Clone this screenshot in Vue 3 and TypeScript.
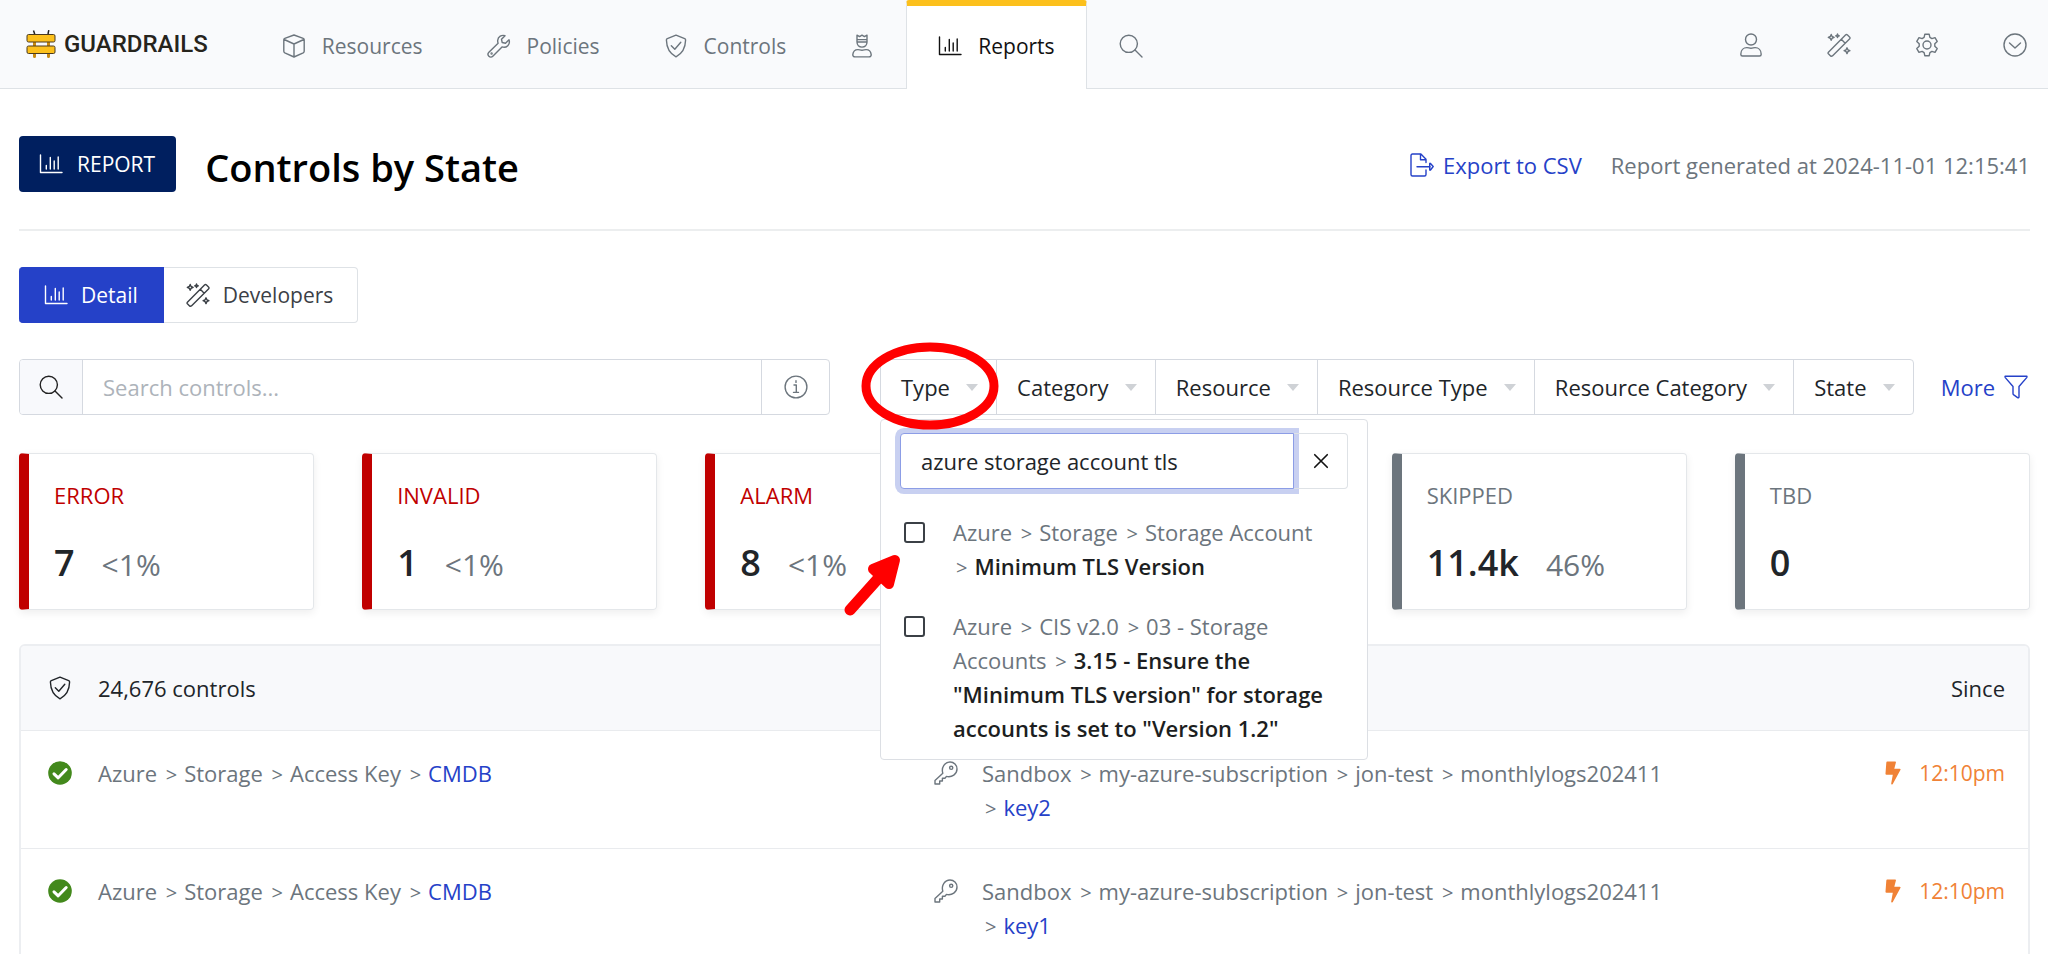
<script setup lang="ts">
import { ref } from 'vue'

interface NavItem { icon: string; label?: string; title: string; active?: boolean }
interface StateCard { label: string; count: string; share?: string; tone: 'alert' | 'muted' }
interface TypeOption { path: string[]; name: string }
interface ControlRow { path: string[]; name: string; resource: string[]; key: string; since: string }

const navItems: NavItem[] = [
  { icon: 'cube', label: 'Resources', title: 'Resources' },
  { icon: 'wrench', label: 'Policies', title: 'Policies' },
  { icon: 'shield', label: 'Controls', title: 'Controls' },
  { icon: 'guard', title: 'Guard' },
  { icon: 'chart', label: 'Reports', title: 'Reports', active: true },
  { icon: 'search', title: 'Search' },
]
const tools: NavItem[] = [
  { icon: 'user', title: 'User' },
  { icon: 'wand', title: 'Developers' },
  { icon: 'gear', title: 'Settings' },
  { icon: 'chevron', title: 'Menu' },
]
const filters = ['Category', 'Resource', 'Resource Type', 'Resource Category', 'State']
const stateCards: StateCard[] = [
  { label: 'ERROR', count: '7', share: '<1%', tone: 'alert' },
  { label: 'INVALID', count: '1', share: '<1%', tone: 'alert' },
  { label: 'ALARM', count: '8', share: '<1%', tone: 'alert' },
  { label: 'SKIPPED', count: '11.4k', share: '46%', tone: 'muted' },
  { label: 'TBD', count: '0', tone: 'muted' },
]
const options: TypeOption[] = [
  { path: ['Azure', 'Storage', 'Storage Account'], name: 'Minimum TLS Version' },
  { path: ['Azure', 'CIS v2.0', '03 - Storage Accounts'], name: '3.15 - Ensure the "Minimum TLS version" for storage accounts is set to "Version 1.2"' },
]
const resourcePath = ['Sandbox', 'my-azure-subscription', 'jon-test', 'monthlylogs202411']
const rows: ControlRow[] = ['key2', 'key1'].map((key) => ({
  path: ['Azure', 'Storage', 'Access Key'],
  name: 'CMDB',
  resource: resourcePath,
  key,
  since: '12:10pm',
}))

const search = ref('')
const typeQuery = ref('azure storage account tls')
const picked = ref<string[]>([])
</script>

<template>
  <svg class="sprite" aria-hidden="true">
    <symbol id="cube" viewBox="0 0 24 24"><path d="M12 1 21.2 4.3q1 .4 1 1.4v11.6q0 1-1 1.5L12 23l-9.2-4.2q-1-.5-1-1.5V5.700q0-1 1-1.400zM2.200 5.500 12 10l9.800-4.500M12 10v13" /></symbol>
    <symbol id="wrench" viewBox="0 0 24 24"><path d="m22 5.800-3.500 3.400-3.300-.7-.7-3.200L18 1.700c-3.300-1.200-7 1-7.300 4.700-.1 1 .1 2 .4 2.800L1.900 18.300a2.700 2.700 0 0 0 3.900 3.900L15 12.900c4.500 1.600 8.600-2.600 7-7.100z" /><circle cx="4.600" cy="19.500" r=".5" /></symbol>
    <symbol id="shield" viewBox="0 0 24 24"><path d="M12 1.200 20.700 4.700q.9.400.9 1.400C21.400 14 18 19.800 12 22.900 6 19.800 2.600 14 2.400 6.100q0-1 .9-1.400zM7.300 11.800l3.500 3.500 6-7" /></symbol>
    <symbol id="guard" viewBox="0 0 24 24"><path d="M7 1.200l2.600 1.400L12 1.200l2.400 1.400L17 1.200v6.900c0 2.800-2 5-5 5s-5-2.200-5-5zM7 5.600h10M7 8h10M5 22.900c-1.400 0-2.300-1-2.200-2.300.3-2.900 2.300-5 5.100-5 1.500 0 2.400.6 4.100.6s2.600-.6 4.100-.6c2.800 0 4.800 2.100 5.100 5 .1 1.300-.8 2.300-2.200 2.300z" /></symbol>
    <symbol id="chart" viewBox="0 0 24 24"><path d="M1.500 3v17.500h21.500M7.300 13.500V17M11.300 5.500V17M15.200 9V17M19.200 5V17" /></symbol>
    <symbol id="search" viewBox="0 0 24 24"><circle cx="9.800" cy="9.800" r="8.600" /><path d="m16 16 7 7" /></symbol>
    <symbol id="user" viewBox="0 0 24 24"><circle cx="12" cy="6.500" r="5.500" /><path d="M3.500 23c-1 0-1.700-.8-1.700-1.800 0-4 2.700-6.600 6.100-6.600 1.600 0 2.300.7 4.100.7s2.500-.7 4.100-.7c3.400 0 6.100 2.600 6.100 6.600 0 1-.7 1.800-1.700 1.800z" /></symbol>
    <symbol id="wand" viewBox="0 0 24 24"><path d="M1.400 19.200 18.500 2q1-1 2 0l2 2q1 1 0 2L5.400 22.900q-1 .7-1.800 0l-2.200-2.100q-.7-.8 0-1.600zM14.300 6.300l3.900 3.900" /><path d="m4.200 1.500.9 2 2 .9-2 .9-.9 2-.9-2-2-.9 2-.9zM20 14.800l.9 2 2 .9-2 .9-.9 2-.9-2-2-.9 2-.9zM10.500 1l.5 1.300 1.300.5-1.300.5-.5 1.300-.5-1.300-1.300-.5 1.300-.5z" /></symbol>
    <symbol id="gear" viewBox="0 0 24 24"><circle cx="12" cy="12" r="4" /><path d="M9.800 1.300h4.400l.7 3.100 2 1.200 3.100-1L22.200 8.400l-2.400 2.300v2.600l2.400 2.300-2.200 3.800-3.100-1-2 1.200-.7 3.100H9.800l-.7-3.100-2-1.200-3.100 1-2.200-3.800 2.400-2.300v-2.600L1.800 8.400 4 4.600l3.100 1 2-1.200z" /></symbol>
    <symbol id="chevron" viewBox="0 0 24 24"><circle cx="12" cy="12" r="11" /><path d="m6.500 10 5.500 5 5.500-5" /></symbol>
    <symbol id="export" viewBox="0 0 24 24"><path d="M16 9.500V6.300L10.900 1H2.500Q1 1 1 2.500v19Q1 23 2.500 23h12q1.500 0 1.500-1.500v-4.500M10.500 1.300v5.500H16M7 13.700h13" /><path d="M19.700 10.500q.3-.5.800 0l2.700 3-2.700 3.500q-.5.500-.8 0z" /></symbol>
    <symbol id="info" viewBox="0 0 24 24"><circle cx="12" cy="12" r="10.900" /><path d="M10 10h2.300v7.200M9.500 17.400h5M12 5.800v1.600" /></symbol>
    <symbol id="funnel" viewBox="0 0 24 24"><path d="M1.200 1.200h21.600q.4.700-.1 1.400L15 11.500V22q-.4 1.200-1.400.6L9.800 19.900q-.8-.6-.8-1.500v-6.900L1.300 2.600q-.5-.7-.1-1.400z" /></symbol>
    <symbol id="key" viewBox="0 0 24 24"><path d="M8.800 12.300C7 6.300 11 1 16 1c4 0 7 3 7 7 0 5-5 8.700-10.500 7.400l-1.600 1.900H8.400v2.700H5.700V23H1v-3.500z" /><circle cx="17.200" cy="6.800" r="1.600" /></symbol>
    <symbol id="bolt" viewBox="0 0 24 24"><path class="solid" d="M6.200.5h8q1 0 .7 1L13.300 7.800h5.400q1.300.1.700 1.300l-7.600 13.800q-1.600 1.300-1.600-.5l1.600-8.700H5.500q-1.200-.1-1-1.200l.8-10.800q.1-1.100.9-1.200z" /></symbol>
    <symbol id="ok" viewBox="0 0 24 24"><circle class="solid" cx="12" cy="12" r="11.800" /><path class="tick" d="m6 12.800 4.200 4 8-8.300" /></symbol>
    <symbol id="close" viewBox="0 0 24 24"><path class="cross" d="M4.500 4.500l15 15M19.500 4.500l-15 15" /></symbol>
  </svg>

  <header class="nav">
    <a class="logo" href="#">
      <svg class="logo-mark" viewBox="0 0 30 30" aria-hidden="true">
        <path class="post" d="M8.500 6v21.500M22.500 6v21.500" />
        <path class="pin" d="M7.500 1.500 8.700 5M22.800 1.200 22 5" />
        <rect class="rail" x="1" y="5.500" width="28" height="7.500" rx="1.500" />
        <rect class="rail" x="1" y="17" width="28" height="7.500" rx="1.500" />
      </svg>
      <span>GUARDRAILS</span>
    </a>
    <nav class="tabs">
      <a v-for="n in navItems" :key="n.title" href="#" :class="['tab', { active: n.active }]" :aria-label="n.title">
        <svg class="icon"><use :href="'#' + n.icon" /></svg>
        <span v-if="n.label">{{ n.label }}</span>
      </a>
    </nav>
    <div class="tools">
      <button v-for="t in tools" :key="t.title" type="button" class="tool" :aria-label="t.title">
        <svg class="icon"><use :href="'#' + t.icon" /></svg>
      </button>
    </div>
  </header>

  <main>
    <section class="heading">
      <span class="badge"><svg class="icon"><use href="#chart" /></svg>REPORT</span>
      <h1>Controls by State</h1>
      <a class="export" href="#"><svg class="icon"><use href="#export" /></svg>Export to CSV</a>
      <span class="generated">Report generated at 2024-11-01 12:15:41</span>
    </section>

    <div class="views">
      <button type="button" class="view on"><svg class="icon"><use href="#chart" /></svg>Detail</button>
      <button type="button" class="view"><svg class="icon"><use href="#wand" /></svg>Developers</button>
    </div>

    <section class="filter-row">
      <div class="search">
        <label class="search-icon" for="search" aria-label="Search controls"><svg class="icon"><use href="#search" /></svg></label>
        <input id="search" v-model="search" type="text" placeholder="Search controls..." />
        <button type="button" class="search-info" aria-label="Search help"><svg class="icon"><use href="#info" /></svg></button>
      </div>

      <div class="filters">
        <div class="type-filter">
          <button type="button" class="filter" aria-expanded="true">Type<i class="caret"></i></button>
          <div class="menu">
            <div class="menu-search">
              <input v-model="typeQuery" type="text" aria-label="Filter types" />
              <button type="button" aria-label="Clear"><svg class="icon"><use href="#close" /></svg></button>
            </div>
            <label v-for="o in options" :key="o.name" class="option">
              <input v-model="picked" type="checkbox" :value="o.name" />
              <span><template v-for="p in o.path" :key="p">{{ p }} <i class="sep">&gt;</i></template><b>{{ o.name }}</b></span>
            </label>
          </div>
          <svg class="marks" viewBox="0 0 180 300" aria-hidden="true">
            <ellipse cx="90" cy="56" rx="64" ry="39" />
            <path class="shaft" d="M10 280 44 242" />
            <path class="head" d="M55 230 33 239 49 254z" />
          </svg>
        </div>
        <button v-for="f in filters" :key="f" type="button" class="filter">{{ f }}<i class="caret"></i></button>
      </div>
      <a class="more" href="#">More<svg class="icon"><use href="#funnel" /></svg></a>
    </section>

    <section class="cards">
      <article v-for="c in stateCards" :key="c.label" :class="['card', c.tone]">
        <h2>{{ c.label }}</h2>
        <p><strong>{{ c.count }}</strong><span v-if="c.share">{{ c.share }}</span></p>
      </article>
    </section>

    <div class="panel">
      <table>
        <colgroup><col class="c-icon" /><col class="c-name" /><col class="c-key" /><col class="c-res" /><col /></colgroup>
        <thead>
          <tr>
            <th><svg class="icon"><use href="#shield" /></svg></th>
            <th colspan="3">24,676 controls</th>
            <th class="since">Since</th>
          </tr>
        </thead>
        <tbody>
          <tr v-for="r in rows" :key="r.key">
            <td class="status"><svg class="icon"><use href="#ok" /></svg></td>
            <td><template v-for="p in r.path" :key="p">{{ p }} <i class="sep">&gt;</i></template><a href="#">{{ r.name }}</a></td>
            <td><svg class="icon"><use href="#key" /></svg></td>
            <td><template v-for="p in r.resource" :key="p">{{ p }} <i class="sep">&gt;</i></template><a href="#">{{ r.key }}</a></td>
            <td class="since late"><svg class="icon"><use href="#bolt" /></svg>{{ r.since }}</td>
          </tr>
        </tbody>
      </table>
    </div>
  </main>
</template>

<style>
html { scrollbar-width: none; }
body {
  background: #fff;
  color: #212529;
  font-family: "Open Sans", "Noto Sans", sans-serif;
  font-size: 22px;
  line-height: 34px;
}
</style>

<style scoped>
* { box-sizing: border-box; }
a { color: #2541c8; text-decoration: none; }
button, input { font: inherit; color: inherit; margin: 0; }
button { background: none; border: 0; padding: 0; cursor: pointer; }
.sprite { position: absolute; width: 0; height: 0; }
.icon {
  width: 24px;
  height: 24px;
  flex: none;
  fill: none;
  stroke: currentColor;
  stroke-width: 1.4;
  stroke-linejoin: round;
  stroke-linecap: round;
}
.solid { fill: currentColor; stroke: none; }
.tick { stroke: #fff; stroke-width: 3; }
.cross { stroke-width: 2; }

.nav {
  display: flex;
  height: 89px;
  background: #f9fafc;
  border-bottom: 1px solid #dee2e6;
}
.logo { display: flex; align-items: center; gap: 8px; margin: 0 42px 0 26px; color: #26241c; font: 500 24px/28px Roboto, sans-serif; }
.logo-mark { width: 30px; height: 30px; }
.post { stroke: #c98a10; stroke-width: 3; stroke-linecap: round; }
.pin { stroke: #222; stroke-width: 1.5; fill: none; }
.rail { fill: #fcc01c; stroke: #4a3a20; stroke-width: 1; }
.tabs { display: flex; font-size: 21px; }
.tab {
  display: flex;
  align-items: center;
  gap: 16px;
  height: 89px;
  padding: 2px 31px 0;
  color: #6c757d;
  border: 1px solid transparent;
  border-width: 0 1px;
}
.tab.active {
  color: #111;
  background: #fff;
  border-color: #dee2e6;
  border-top: 6px solid #fcc01c;
  border-radius: 3px 3px 0 0;
  padding-top: 0;
  padding-bottom: 4px;
}
.tools { display: flex; align-items: center; gap: 64px; margin-left: auto; padding: 2px 21px 0 0; color: #6c757d; }
.tool { display: flex; }

main { padding: 0 18px 0 19px; }
.heading {
  display: flex;
  align-items: center;
  margin-bottom: 36px;
  padding: 47px 0 37px;
  border-bottom: 2px solid #eceeef;
}
.badge {
  display: flex;
  align-items: center;
  gap: 14px;
  height: 56px;
  padding: 0 21px 0 20px;
  background: #001f5f;
  color: #fff;
  border-radius: 4px;
  font-size: 21px;
}
h1 { margin: 0 0 0 29px; padding-top: 6px; color: #000; font-size: 38px; line-height: 50px; font-weight: 600; }
.export { display: flex; align-items: center; gap: 9px; margin-left: auto; }
.generated { margin-left: 29px; color: #6c757d; }
.export, .generated { padding-top: 2px; }

.views { display: flex; margin-bottom: 36px; font-size: 21px; }
.view {
  display: flex;
  align-items: center;
  gap: 13px;
  height: 56px;
  padding: 0 24px 0 22px;
  border: 1px solid #dee2e6;
  border-left: 0;
  border-radius: 0 4px 4px 0;
  color: #3b4046;
}
.view.on { padding: 0 25px; background: #2541c8; border-color: #2541c8; color: #fff; border-radius: 4px 0 0 4px; }

.filter-row { display: flex; align-items: center; margin-bottom: 38px; }
.search {
  display: flex;
  flex: 0 1 811px;
  min-width: 0;
  height: 56px;
  margin-right: 50px;
  border: 1px solid #d5d9e0;
  border-radius: 4px;
  overflow: hidden;
}
.search-icon, .search-info { display: flex; align-items: center; justify-content: center; }
.search-icon { width: 63px; background: #f8f9fc; border-right: 1px solid #d5d9e0; color: #222; }
.search-info { width: 68px; border-left: 1px solid #d5d9e0; color: #6c757d; }
.search input { flex: 1; min-width: 0; border: 0; padding: 0 20px; outline: 0; background: #fff; }
.search input::placeholder { color: #adb3ba; opacity: 1; }

.filters { display: flex; flex: 1; height: 56px; border: 1px solid #d5d9e0; border-radius: 4px; }
.filter { display: flex; flex: 1 1 auto; align-items: center; justify-content: space-between; gap: 12px; height: 54px; padding: 0 18px 0 20px; white-space: nowrap; }
.filters > .filter { border-left: 1px solid #d5d9e0; }
.type-filter { position: relative; display: flex; flex: 1 1 auto; }
.caret { border: solid transparent; border-width: 7px 6px 0; border-top-color: #cfd2d6; }
.more { display: flex; align-items: center; gap: 9px; margin-left: 27px; padding-right: 2px; }

.menu {
  position: absolute;
  z-index: 2;
  top: 59px;
  left: -1px;
  width: 488px;
  padding: 13px 19px 14px;
  background: #fff;
  border: 1px solid #dcdfe4;
  border-radius: 4px;
}
.menu-search { display: flex; height: 56px; margin-bottom: 26px; }
.menu-search input {
  flex: 1;
  min-width: 0;
  padding: 0 20px;
  border: 1px solid #8c9de6;
  border-radius: 4px 0 0 4px;
  outline: 0;
  box-shadow: 0 0 0 5px #c8d0f1;
}
.menu-search button { display: flex; align-items: center; justify-content: center; width: 54px; border: 1px solid #dee2e6; border-left: 0; border-radius: 0 4px 4px 0; }
.menu-search button .icon { width: 20px; height: 20px; color: #111; }
.option { display: flex; gap: 28px; padding-left: 4px; color: #6c757d; }
.option + .option { margin-top: 26px; }
.option input { appearance: none; flex: none; width: 21px; height: 21px; margin-top: 7px; border: 2px solid #3b4046; border-radius: 3px; background: #fff; }
.option b { color: #1c1e21; font-weight: 600; }
.sep { font-style: normal; font-size: 20px; line-height: 20px; margin: 0 7px 0 3px; }

.marks { position: absolute; z-index: 3; top: -30px; left: -41px; width: 180px; height: 300px; pointer-events: none; fill: none; stroke: #f00; stroke-linecap: round; stroke-linejoin: round; }
.marks ellipse { stroke-width: 9; }
.shaft { stroke-width: 11; }
.head { stroke-width: 10; fill: #f00; }

.cards { display: grid; grid-template-columns: repeat(6, 1fr); gap: 48px; margin-bottom: 34px; }
.card {
  height: 157px;
  padding: 24px 25px 0;
  border: 1px solid #e4e7ea;
  border-left: 10px solid;
  border-radius: 4px;
  box-shadow: 0 3px 8px rgba(0, 0, 0, 0.07);
}
.card.alert { border-left-color: #c00000; color: #c00000; }
.card.muted { border-left-color: #6c757d; color: #6c757d; }
.card:nth-child(4) { grid-column: 5; }
.card h2 { margin: 0 0 26px; font-size: 22px; line-height: 34px; font-weight: 400; }
.card p { display: flex; align-items: baseline; gap: 27px; margin: 0; color: #6c757d; font-size: 30px; line-height: 50px; }
.card strong { color: #212529; font-size: 36px; font-weight: 600; }

.panel { border: 2px solid #eceef1; border-radius: 6px; overflow: hidden; }
table { width: 100%; table-layout: fixed; border-collapse: collapse; }
.c-icon { width: 77px; }
.c-name { width: 836px; }
.c-key { width: 48px; }
.c-res { width: 730px; }
th, td { padding: 25px 0 24px; text-align: left; vertical-align: top; font-weight: 400; }
th { padding: 25px 0; background: #f8f9fb; }
td { border-top: 1px solid #e9ebee; color: #6c757d; }
th:first-child, td:first-child { padding-left: 27px; }
th .icon, td .icon { display: block; margin-top: 5px; }
th.since, td.since { padding-right: 23px; text-align: right; }
td.status { color: #43891c; }
td.late { color: #f08236; font-size: 21px; }
td.late .icon { display: inline-block; margin: 0 14px -4px 0; }
</style>
